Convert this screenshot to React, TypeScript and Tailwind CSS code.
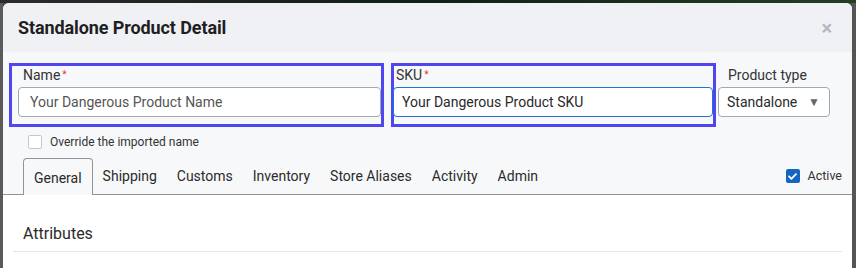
import { FaCheck } from "react-icons/fa";

const tabs = ["General", "Shipping", "Customs", "Inventory", "Store Aliases", "Activity", "Admin"];

const App = () => {
  return (
    <div
      className="w-[856px] h-[268px] overflow-hidden bg-[#4a4a4a] flex flex-col"
      style={{ fontFamily: "Roboto, 'Liberation Sans', sans-serif" }}
    >
      {/* backdrop nav strip */}
      <div className="h-[3px] shrink-0 bg-gradient-to-r from-[#2b2b2b] via-[#0f1f16] to-[#24401f]" />

      <div className="flex flex-1 min-h-0">
        <div className="w-[3px] shrink-0 bg-[#5a5a5a]" />

        {/* modal */}
        <div className="w-[849px] shrink-0 rounded-t-[6px] overflow-hidden bg-[#f7f8fa] flex flex-col">
          {/* header */}
          <div className="h-[49px] shrink-0 bg-[#f0f1f5] flex items-center justify-between pl-[15px] pr-[20px]">
            <h1 className="text-[18px] font-bold text-[#1f1f1f] tracking-[-0.1px]">
              Standalone Product Detail
            </h1>
            <span className="text-[#b3b7be] text-[20px] leading-none font-bold">×</span>
          </div>

          {/* fields */}
          <div className="flex items-start pt-[11px] pl-[6px]">
            <div className="w-[375px] h-[64px] border-[3px] border-[#5046f0] pt-[1px] px-[6px] flex flex-col">
              <label className="h-4 leading-4 text-[14px] text-[#333] pl-[5px] mb-1">
                Name<span className="text-[#e53935] text-[10px] align-top ml-[2px]">*</span>
              </label>
              <div className="h-[30px] w-[363px] rounded-[4px] border border-[#a3a8ae] bg-white flex items-center pl-[11px] text-[14px] text-[#555]">
                Your Dangerous Product Name
              </div>
            </div>

            <div className="ml-[7px] w-[325px] h-[64px] border-[3px] border-[#5046f0] pt-[1px] flex flex-col">
              <label className="h-4 leading-4 text-[14px] text-[#333] pl-[2px] mb-1">
                SKU<span className="text-[#e53935] text-[10px] align-top ml-[2px]">*</span>
              </label>
              <div className="h-[30px] -ml-[1px] rounded-[4px] border border-[#1976d2] bg-white flex items-center pl-[8px] text-[14px] text-[#2a2a2a]">
                Your Dangerous Product SKU
              </div>
            </div>

            <div className="ml-[2px] pt-[4px] flex flex-col">
              <label className="h-4 leading-4 text-[14px] text-[#333] pl-[10px] mb-1">Product type</label>
              <div className="h-[30px] w-[112px] rounded-[4px] border border-[#a3a8ae] bg-white flex items-center justify-between pl-[8px] pr-[9px] text-[14px] text-[#2a2a2a]">
                Standalone
                <span className="text-[#666] text-[12px]">▼</span>
              </div>
            </div>
          </div>

          {/* override checkbox */}
          <div className="flex items-center h-[14px] mt-[8px] pl-[25px] gap-[8px]">
            <span className="w-[14px] h-[14px] rounded-[2px] border border-[#c4c8cd] bg-white" />
            <span className="text-[12px] text-[#333]">Override the imported name</span>
          </div>

          {/* tabs */}
          <div className="mt-[9px] flex items-end justify-between border-b border-[#8f949a] pl-[20px] pr-[10px]">
            <div className="flex items-end">
              {tabs.map((t, i) =>
                i === 0 ? (
                  <div
                    key={t}
                    className="h-[37px] px-[10px] -mb-px rounded-t-[4px] border border-b-0 border-[#8f949a] bg-[#f7f8fa] flex items-center pt-[2px] text-[14px] text-[#2a2a2a]"
                  >
                    {t}
                  </div>
                ) : (
                  <div key={t} className="h-[36px] px-[10px] flex items-center text-[14px] text-[#2a2a2a]">
                    {t}
                  </div>
                )
              )}
            </div>
            <div className="h-[36px] flex items-center gap-[8px]">
              <span className="w-[14px] h-[14px] rounded-[2px] bg-[#1565c0] flex items-center justify-center">
                <FaCheck className="text-white w-[9px] h-[9px]" />
              </span>
              <span className="text-[12.5px] text-[#333] pt-[1px]">Active</span>
            </div>
          </div>

          {/* content */}
          <div className="flex-1 bg-white pt-[29px] px-[10px]">
            <h2 className="text-[16px] text-[#2a2a2a] leading-[20px] pl-[10px] pb-[7px] border-b border-[#e3e6ea]">
              Attributes
            </h2>
          </div>
        </div>

        <div className="flex-1 bg-[#555]" />
      </div>
    </div>
  );
};

export default App;
